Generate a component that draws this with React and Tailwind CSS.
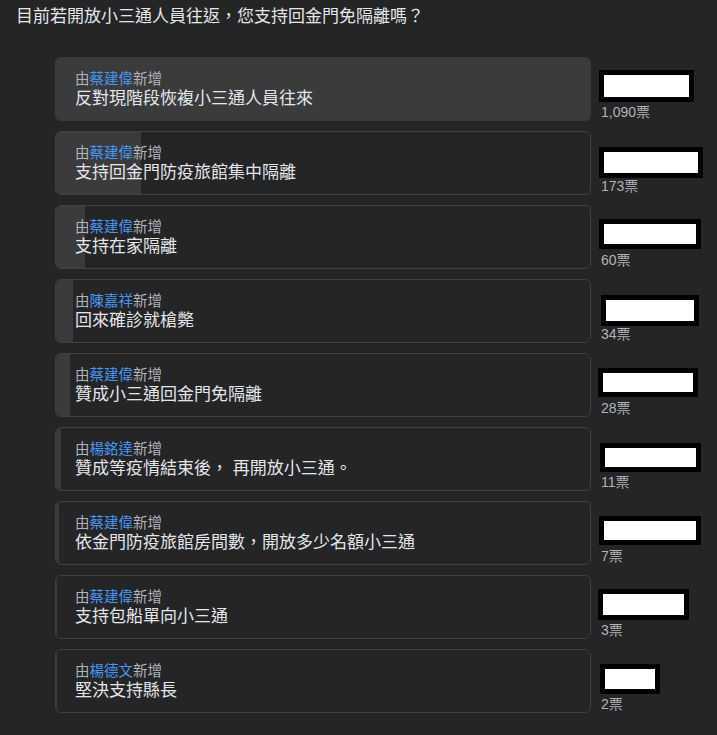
import React from 'react';

const options = [
  { by: '蔡建偉', text: '反對現階段恢複小三通人員往來', votes: 1090, box: [2, 13, 95, 32] },
  { by: '蔡建偉', text: '支持回金門防疫旅館集中隔離', votes: 173, box: [2, 16, 104, 31] },
  { by: '蔡建偉', text: '支持在家隔離', votes: 60, box: [2, 14, 102, 30] },
  { by: '陳嘉祥', text: '回來確診就槍斃', votes: 34, box: [4, 16, 98, 31] },
  { by: '蔡建偉', text: '贊成小三通回金門免隔離', votes: 28, box: [1, 15, 100, 29] },
  { by: '楊銘達', text: '贊成等疫情結束後， 再開放小三通。', votes: 11, box: [3, 16, 101, 29] },
  { by: '蔡建偉', text: '依金門防疫旅館房間數，開放多少名額小三通', votes: 7, box: [2, 15, 102, 29] },
  { by: '蔡建偉', text: '支持包船單向小三通', votes: 3, box: [1, 14, 91, 31] },
  { by: '楊德文', text: '堅決支持縣長', votes: 2, box: [3, 15, 60, 30] },
];

const maxVotes = Math.max(...options.map((o) => o.votes));

const font = { fontFamily: '"Segoe UI", "Liberation Sans", "Noto Sans CJK TC", sans-serif' };

const App = () => {
  return (
    <div className="min-h-[735px] w-[717px] bg-[#242526] text-[#e4e6eb]" style={font}>
      <h1 className="pl-4 pt-[6px] text-[17px] font-normal leading-[22px]">
        目前若開放小三通人員往返，您支持回金門免隔離嗎？
      </h1>

      <div className="mt-[29px] flex flex-col gap-[10px] pl-[55px]">
        {options.map((opt, i) => {
          const full = opt.votes === maxVotes;
          const [bx, by, bw, bh] = opt.box;
          return (
            <div key={i} className="flex h-[64px] gap-[6px]">
              {/* option card with vote bar */}
              <div
                className={
                  'relative w-[536px] overflow-hidden rounded-[6px] border ' +
                  (full ? 'border-[#3a3b3c] bg-[#3a3b3c]' : 'border-[#3e4042] bg-[#242526]')
                }
              >
                <div
                  className="absolute inset-y-0 left-0 bg-[#3a3b3c]"
                  style={{ width: `${(opt.votes / maxVotes) * 100}%` }}
                />
                <div className="relative pl-[19px] pt-[12px]">
                  <p className="text-[14.5px] leading-[18px] text-[#b0b3b8]">
                    由<span className="text-[#4a95f5]">{opt.by}</span>新增
                  </p>
                  <p className="text-[17px] leading-[22px] text-[#e4e6eb]">{opt.text}</p>
                </div>
              </div>

              {/* voters (redacted) + count */}
              <div className="relative flex w-[110px] flex-col justify-end">
                <div
                  className="absolute border-[5px] border-black bg-white"
                  style={{ left: bx, top: by, width: bw, height: bh }}
                />
                <p className="pl-[4px] text-[14px] leading-[18px] text-[#b0b3b8]">
                  {opt.votes.toLocaleString('en-US')}票
                </p>
              </div>
            </div>
          );
        })}
      </div>
    </div>
  );
};

export default App;
